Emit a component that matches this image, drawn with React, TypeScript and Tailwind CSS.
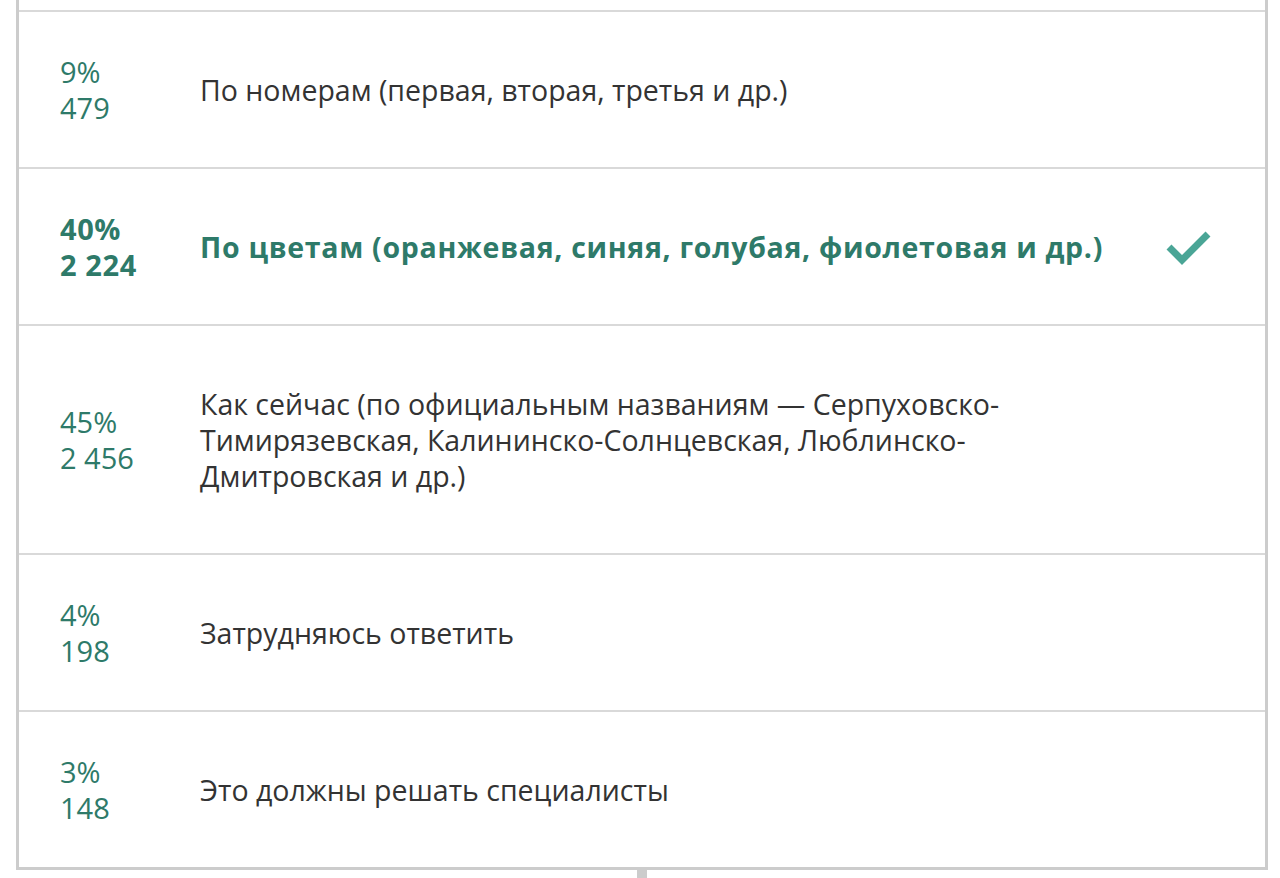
import React from "react";

type Row = { pct: string; count: string; text: string; selected?: boolean };

const rows: Row[] = [
  { pct: "9%", count: "479", text: "По номерам (первая, вторая, третья и др.)" },
  {
    pct: "40%",
    count: "2 224",
    text: "По цветам (оранжевая, синяя, голубая, фиолетовая и др.)",
    selected: true,
  },
  {
    pct: "45%",
    count: "2 456",
    text: "Как сейчас (по официальным названиям — Серпуховско-Тимирязевская, Калининско-Солнцевская, Люблинско-Дмитровская и др.)",
  },
  { pct: "4%", count: "198", text: "Затрудняюсь ответить" },
  { pct: "3%", count: "148", text: "Это должны решать специалисты" },
];

export default function App() {
  return (
    <div
      className="w-[1280px] h-[878px] bg-white overflow-hidden"
      style={{ fontFamily: '"Open Sans", "Noto Sans", sans-serif' }}
    >
      <div className="ml-[16px] w-[1252px] border-x-[3px] border-b-[3px] border-[#cccccc] bg-white">
        <div className="h-[10px]" />
        {rows.map((r, i) => (
          <div
            key={i}
            className="flex items-center border-t-2 border-[#d9d9d9]"
          >
            <div
              className={
                "pl-[41px] w-[181px] shrink-0 text-[29px] leading-[36px] text-[#2e7a69] " +
                (r.selected ? "font-bold tracking-[0.6px]" : "")
              }
            >
              <div>{r.pct}</div>
              <div>{r.count}</div>
            </div>
            <div
              className={
                "flex-1 pt-[60px] pb-[59px] pr-[40px] text-[28.5px] leading-[36px] " +
                (r.selected
                  ? "font-bold tracking-[0.7px] text-[#2e7a69]"
                  : "text-[#333333]")
              }
            >
              <div className={r.selected ? "" : "max-w-[860px]"}>{r.text}</div>
            </div>
            {r.selected && (
              <div className="w-[100px] shrink-0 flex items-center justify-start">
                <svg width="48" height="40" viewBox="0 0 48 40">
                  <path
                    d="M4 20 L17 33 L43 7"
                    fill="none"
                    stroke="#4aa596"
                    strokeWidth="7"
                    strokeLinejoin="miter"
                  />
                </svg>
              </div>
            )}
          </div>
        ))}
      </div>
      <div className="ml-[637px] w-[10px] h-[12px] bg-[#cccccc]" />
    </div>
  );
}
